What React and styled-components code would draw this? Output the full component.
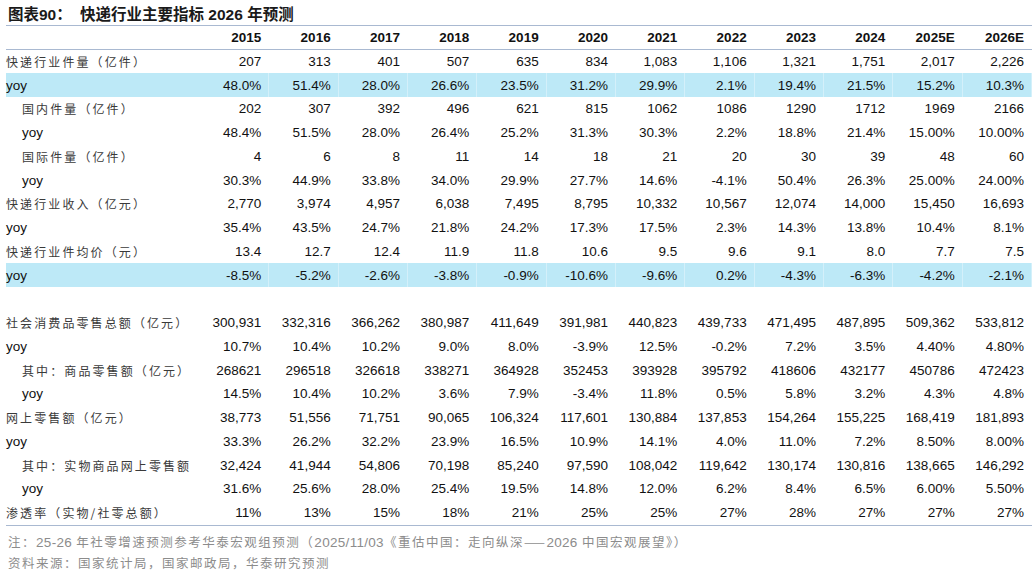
import React from 'react';
import styled, { createGlobalStyle, css } from 'styled-components';

const Global = createGlobalStyle`
  html, body { margin: 0; padding: 0; background: #fff; }
  body { font-family: "Liberation Sans", Arial, "Noto Sans CJK SC", sans-serif; color: #111; }
`;

const Page = styled.div`
  width: 1032px;
  height: 574px;
  overflow: hidden;
  box-sizing: border-box;
`;

const Title = styled.div`
  height: 25px;
  display: flex;
  align-items: center;
  padding-left: 8px;
  font-family: "Liberation Sans", Arial, "Noto Sans CJK SC", sans-serif;
  font-weight: 700;
  font-size: 15.5px;
  color: #1a1a1a;
  white-space: pre;
`;

const TitleTag = styled.span`
  margin-right: 4px;
`;

const Table = styled.div`
  margin-left: 6px;
  width: 1026px;
  border-top: 1.5px solid #a9b9d1;
  border-bottom: 1.5px solid #a9b9d1;
`;

const Row = styled.div`
  display: grid;
  grid-template-columns: 194px repeat(12, 1fr);
  align-items: center;
  height: ${p => (p.$head ? '22.5px' : '23.75px')};
  background: ${p => (p.$hl ? '#bde9f7' : 'transparent')};
  ${p => p.$head && css`border-bottom: 1.5px solid #a9b9d1;`}
`;

const Label = styled.div`
  padding-left: ${p => (p.$indent ? '16px' : '0')};
  font-family: ${p => (p.$latin ? '"Liberation Sans", Arial, sans-serif' : '"Noto Sans CJK SC", sans-serif')};
  font-size: ${p => (p.$latin ? '13.5px' : '12px')};
  letter-spacing: ${p => (p.$latin ? '0' : '2.1px')};
  color: ${p => (p.$latin ? '#111' : '#3a3a3a')};
  white-space: nowrap;
`;

const Cell = styled.div`
  height: 100%;
  display: flex;
  align-items: center;
  justify-content: flex-end;
  padding-right: 8px;
  font-size: 13.5px;
  font-weight: ${p => (p.$head ? 700 : 400)};
  color: #111;
  ${p => p.$hl && css`box-shadow: inset -1px 0 0 rgba(255, 255, 255, 0.35);`}
`;

const Notes = styled.div`
  padding: 6px 0 0 8px;
  font-family: "Noto Sans CJK SC", sans-serif;
  font-size: 12.5px;
  letter-spacing: 1.5px;
  color: #8c8c8c;
  line-height: 20px;
  white-space: nowrap;
`;

const Latin = styled.span`
  font-family: "Liberation Sans", Arial, sans-serif;
  font-size: 13.5px;
  letter-spacing: 0.3px;
`;

const years = ['2015', '2016', '2017', '2018', '2019', '2020', '2021', '2022', '2023', '2024', '2025E', '2026E'];

const s = str => str.split(' ');

const rows = [
  { label: '快递行业件量（亿件）', v: s('207 313 401 507 635 834 1,083 1,106 1,321 1,751 2,017 2,226') },
  { label: 'yoy', latin: true, hl: true, v: s('48.0% 51.4% 28.0% 26.6% 23.5% 31.2% 29.9% 2.1% 19.4% 21.5% 15.2% 10.3%') },
  { label: '国内件量（亿件）', indent: true, v: s('202 307 392 496 621 815 1062 1086 1290 1712 1969 2166') },
  { label: 'yoy', latin: true, indent: true, v: s('48.4% 51.5% 28.0% 26.4% 25.2% 31.3% 30.3% 2.2% 18.8% 21.4% 15.00% 10.00%') },
  { label: '国际件量（亿件）', indent: true, v: s('4 6 8 11 14 18 21 20 30 39 48 60') },
  { label: 'yoy', latin: true, indent: true, v: s('30.3% 44.9% 33.8% 34.0% 29.9% 27.7% 14.6% -4.1% 50.4% 26.3% 25.00% 24.00%') },
  { label: '快递行业收入（亿元）', v: s('2,770 3,974 4,957 6,038 7,495 8,795 10,332 10,567 12,074 14,000 15,450 16,693') },
  { label: 'yoy', latin: true, v: s('35.4% 43.5% 24.7% 21.8% 24.2% 17.3% 17.5% 2.3% 14.3% 13.8% 10.4% 8.1%') },
  { label: '快递行业件均价（元）', v: s('13.4 12.7 12.4 11.9 11.8 10.6 9.5 9.6 9.1 8.0 7.7 7.5') },
  { label: 'yoy', latin: true, hl: true, v: s('-8.5% -5.2% -2.6% -3.8% -0.9% -10.6% -9.6% 0.2% -4.3% -6.3% -4.2% -2.1%') },
  { blank: true },
  { label: '社会消费品零售总额（亿元）', v: s('300,931 332,316 366,262 380,987 411,649 391,981 440,823 439,733 471,495 487,895 509,362 533,812') },
  { label: 'yoy', latin: true, v: s('10.7% 10.4% 10.2% 9.0% 8.0% -3.9% 12.5% -0.2% 7.2% 3.5% 4.40% 4.80%') },
  { label: '其中：商品零售额（亿元）', indent: true, v: s('268621 296518 326618 338271 364928 352453 393928 395792 418606 432177 450786 472423') },
  { label: 'yoy', latin: true, indent: true, v: s('14.5% 10.4% 10.2% 3.6% 7.9% -3.4% 11.8% 0.5% 5.8% 3.2% 4.3% 4.8%') },
  { label: '网上零售额（亿元）', v: s('38,773 51,556 71,751 90,065 106,324 117,601 130,884 137,853 154,264 155,225 168,419 181,893') },
  { label: 'yoy', latin: true, v: s('33.3% 26.2% 32.2% 23.9% 16.5% 10.9% 14.1% 4.0% 11.0% 7.2% 8.50% 8.00%') },
  { label: '其中：实物商品网上零售额', indent: true, v: s('32,424 41,944 54,806 70,198 85,240 97,590 108,042 119,642 130,174 130,816 138,665 146,292') },
  { label: 'yoy', latin: true, indent: true, v: s('31.6% 25.6% 28.0% 25.4% 19.5% 14.8% 12.0% 6.2% 8.4% 6.5% 6.00% 5.50%') },
  { label: '渗透率（实物/社零总额）', v: s('11% 13% 15% 18% 21% 25% 25% 27% 28% 27% 27% 27%') },
];

export default function App() {
  return (
    <Page>
      <Global />
      <Title>
        <TitleTag>图表90：</TitleTag> 快递行业主要指标 2026 年预测
      </Title>
      <Table>
        <Row $head>
          <Label />
          {years.map(y => (
            <Cell key={y} $head>{y}</Cell>
          ))}
        </Row>
        {rows.map((r, i) =>
          r.blank ? (
            <Row key={i} />
          ) : (
            <Row key={i} $hl={r.hl}>
              <Label $latin={r.latin} $indent={r.indent}>{r.label}</Label>
              {r.v.map((x, j) => (
                <Cell key={j} $hl={r.hl}>{x}</Cell>
              ))}
            </Row>
          )
        )}
      </Table>
      <Notes>
        <div>
          注：<Latin>25-26</Latin> 年社零增速预测参考华泰宏观组预测（<Latin>2025/11/03</Latin>《重估中国：走向纵深——<Latin>2026</Latin> 中国宏观展望》）
        </div>
        <div>资料来源：国家统计局，国家邮政局，华泰研究预测</div>
      </Notes>
    </Page>
  );
}
